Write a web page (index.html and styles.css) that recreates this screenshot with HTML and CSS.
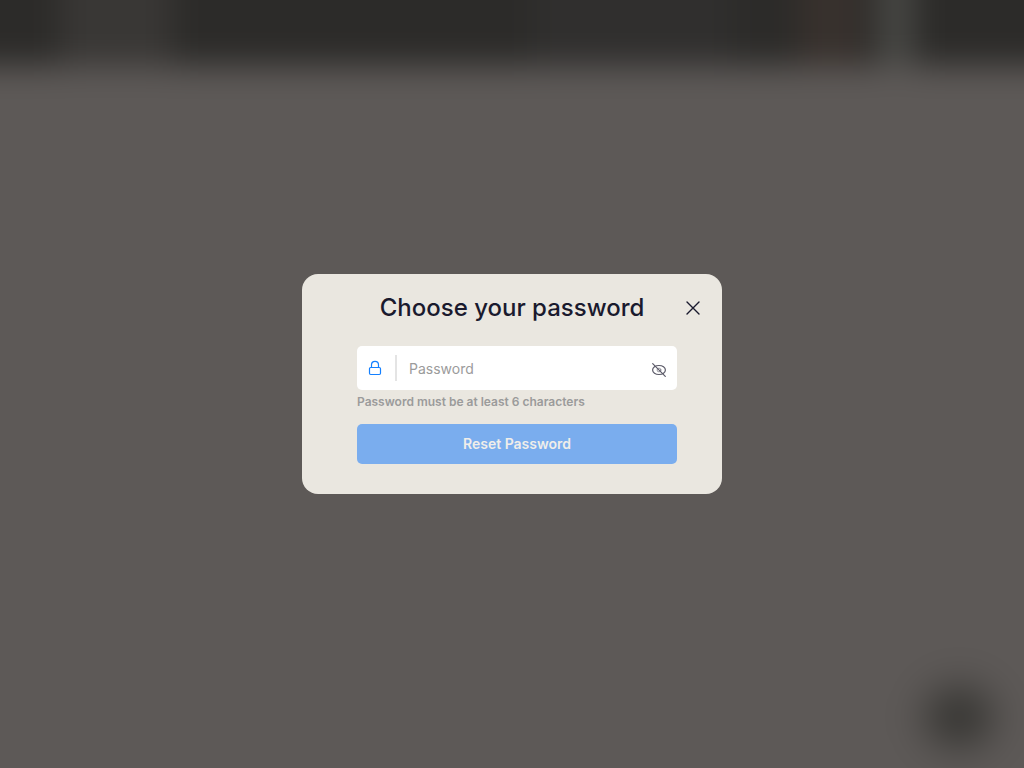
FILE: index.html
```html
<!DOCTYPE html>
<html lang="en">
<head>
    <meta charset="UTF-8">
    <meta name="viewport" content="width=device-width, initial-scale=1.0">
    <title>Choose your password</title>
    <link rel="stylesheet" href="styles.css">
</head>
<body>
    <div class="page">
        <header class="site-header">
            <div class="brand"></div>
            <div class="search"></div>
            <div class="promo"></div>
            <div class="avatar"></div>
        </header>
        <div class="chat-bubble"></div>
    </div>

    <div class="overlay">
        <div class="modal" role="dialog" aria-modal="true" aria-labelledby="modalTitle">
            <div class="modal-header">
                <h2 id="modalTitle">Choose your password</h2>
                <button type="button" class="close" aria-label="Close">
                    <svg width="16" height="16" viewBox="0 0 16 16" fill="none" stroke="currentColor" stroke-width="1.4" stroke-linecap="round"><path d="M2 2l12 12M14 2L2 14"/></svg>
                </button>
            </div>
            <form class="reset-form">
                <div class="field">
                    <label for="password" aria-label="Password">
                        <svg width="14" height="16" viewBox="0 0 14 16" fill="none" stroke="currentColor" stroke-width="1.2"><rect x="1.5" y="7.5" width="11" height="7" rx="1.2"/><path d="M3.5 7.5V4.8a3.5 3.5 0 0 1 7 0v2.7"/></svg>
                    </label>
                    <span class="divider"></span>
                    <input type="password" id="password" placeholder="Password" aria-describedby="passwordHint">
                    <button type="button" class="toggle" aria-label="Show password">
                        <svg width="16" height="20" viewBox="0 0 16 20" fill="none" stroke="currentColor" stroke-width="1.2" stroke-linecap="round"><ellipse cx="8" cy="12" rx="6.4" ry="4.5"/><circle cx="8" cy="12" r="1.9" stroke-width="1" stroke-opacity="0.6"/><path d="M1.7 5.7l12.6 12.6"/></svg>
                    </button>
                </div>
                <p class="hint" id="passwordHint">Password must be at least 6 characters</p>
                <button type="submit" class="submit">Reset Password</button>
            </form>
        </div>
    </div>
</body>
</html>
```
FILE: styles.css
```css
* { margin: 0; padding: 0; box-sizing: border-box; }
body { font-family: 'Inter', sans-serif; background-color: #5d5957; color: #1a1a2e; min-height: 100vh; overflow: hidden; }
button { border: none; background: none; font-family: inherit; cursor: pointer; }
svg { display: block; }

/* Page behind the dialog, wider than the window so the blur has no edges */
.page { position: fixed; inset: -60px; background-color: #5d5957; filter: blur(16px); }
.site-header { display: flex; height: 126px; padding: 0 60px; background-color: #2c2b29; }
.brand { width: 112px; margin-left: 60px; background-color: #393735; }
.search { width: 200px; margin-left: 360px; background-color: #302f2e; }
.promo { width: 60px; margin-left: 68px; background-color: #38312d; }
.avatar { width: 36px; margin-left: 18px; background-color: #484845; }
.chat-bubble { position: absolute; right: 91px; bottom: 81px; width: 68px; height: 60px; border-radius: 50%; background-color: #363532; filter: blur(12px); }

.overlay { position: fixed; inset: 0; display: flex; align-items: center; justify-content: center; }
.modal { width: 420px; max-width: 100%; padding: 16px 12px 30px; border-radius: 16px; background-color: #eae7e0; }
.modal-header { display: flex; align-items: center; height: 36px; padding-left: 34px; }
.modal-header h2 { flex: 1; font-size: 24px; font-weight: 500; line-height: 32px; text-align: center; }
.close { padding: 9px; color: #1a1a2e; }

.reset-form { width: 320px; max-width: 100%; margin: 20px 0 0 43px; }
.field { display: flex; align-items: center; height: 44px; padding: 0 10px 0 11px; border-radius: 5px; background-color: #fff; }
.field label { color: #1480ff; }
.divider { width: 2px; height: 26px; margin: 0 12px 0 13px; background-color: #e4e4e4; }
.field input { flex: 1; min-width: 0; border: none; outline: none; background: none; font-family: inherit; font-size: 14px; color: #1a1a2e; }
.field input::placeholder { color: #9b9b9b; }
.toggle { color: #5b5a68; }
.hint { margin: 4px 0 14px; font-size: 12px; font-weight: 600; line-height: 16px; color: #9b9b9b; }
.submit { display: block; width: 100%; height: 40px; padding-bottom: 2px; border-radius: 5px; background-color: #7aadee; font-size: 14px; font-weight: 600; color: #f0eeea; }
```
